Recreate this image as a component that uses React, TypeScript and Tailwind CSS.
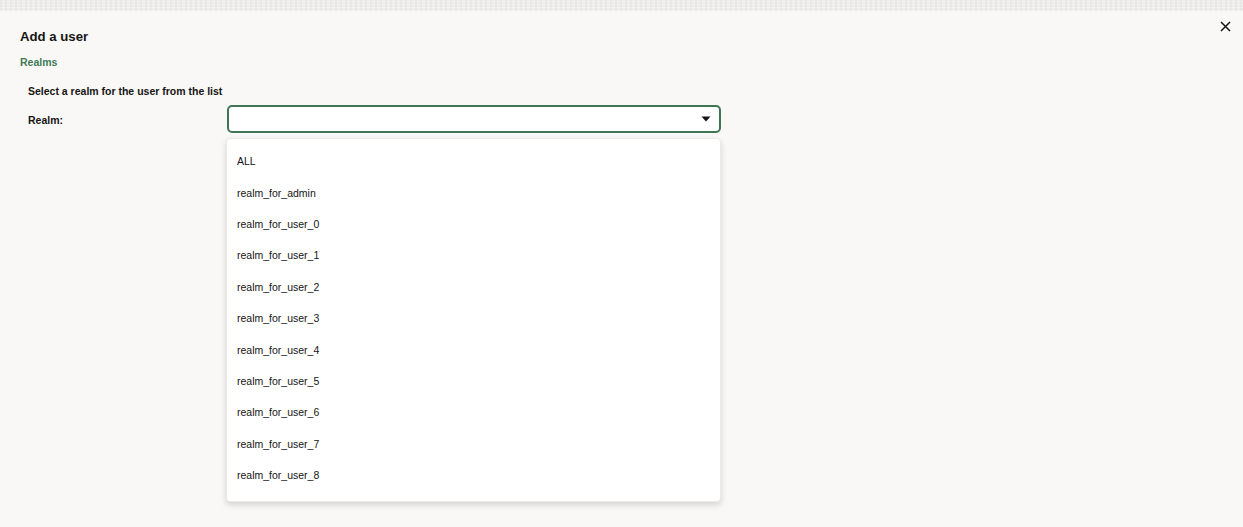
import React from "react";

const items = [
  "ALL",
  "realm_for_admin",
  "realm_for_user_0",
  "realm_for_user_1",
  "realm_for_user_2",
  "realm_for_user_3",
  "realm_for_user_4",
  "realm_for_user_5",
  "realm_for_user_6",
  "realm_for_user_7",
  "realm_for_user_8",
];

export default function App() {
  return (
    <div
      className="w-[1243px] h-[527px] overflow-hidden bg-[#f9f8f6] text-[#161513] flex flex-col"
      style={{ fontFamily: '"Liberation Sans", Arial, sans-serif' }}
    >
      <div
        className="h-[11px] shrink-0 bg-[#eeedeb]"
        style={{
          backgroundImage:
            "repeating-linear-gradient(90deg, rgba(0,0,0,0.03) 0 2px, transparent 2px 5px), repeating-linear-gradient(0deg, rgba(255,255,255,0.35) 0 1px, transparent 1px 3px)",
        }}
      />
      <div className="relative flex-1">
        <button className="absolute left-[1219px] top-[9px] w-[12px] h-[12px] flex items-center justify-center">
          <svg width="11" height="11" viewBox="0 0 11 11">
            <path d="M1 1L10 10M10 1L1 10" stroke="#161513" strokeWidth="1.5" />
          </svg>
        </button>
        <div className="pl-[20px] pt-[18px]">
          <h1 className="text-[13.2px] font-bold leading-[16px]">Add a user</h1>
          <h2 className="mt-[11px] text-[10.5px] font-bold leading-[13px] text-[#3d7a55]">Realms</h2>
          <div className="pl-[8px]">
            <p className="mt-[16px] text-[10.5px] font-bold leading-[13px]">
              Select a realm for the user from the list
            </p>
            <div className="mt-[7px] flex items-start">
              <label className="w-[199px] pt-[9px] text-[10.5px] font-bold leading-[13px]">Realm:</label>
              <div className="relative">
                <div className="w-[494px] h-[28px] rounded-[5px] border-2 border-[#3f7553] bg-white flex items-center justify-end pr-[8px]">
                  <svg width="10" height="6" viewBox="0 0 10 6">
                    <path d="M0.5 0.5H9.5L5 5.5Z" fill="#161513" />
                  </svg>
                </div>
                <div className="absolute left-[-1px] top-[33px] w-[495px] h-[364px] bg-white rounded-[4px] border border-[#ebeae8] shadow-[0_3px_6px_rgba(0,0,0,0.15)] pt-[7px] overflow-hidden">
                  {items.map((it) => (
                    <div key={it} className="h-[31.4px] flex items-center pl-[10px] text-[10.5px] leading-[13px] text-[#161513]">
                      {it}
                    </div>
                  ))}
                </div>
              </div>
            </div>
          </div>
        </div>
      </div>
    </div>
  );
}
